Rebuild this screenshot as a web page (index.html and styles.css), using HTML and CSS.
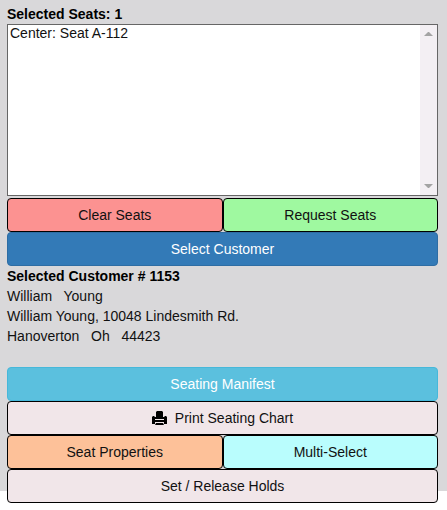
FILE: index.html
```html
<!DOCTYPE html>
<html lang="en">
<head>
<meta charset="utf-8">
<title>Seat Selection</title>
<link rel="stylesheet" href="styles.css">
</head>
<body>
<main class="panel">
  <label class="heading" for="seats">Selected Seats: 1</label>
  <div class="listbox">
    <select id="seats" class="seats" size="9">
      <option>Center: Seat A-112</option>
    </select>
    <div class="scrollbar" aria-hidden="true">
      <svg width="9" height="4" viewBox="0 0 9 4"><path d="M4 0h1l4 4H0z"/></svg>
      <svg width="9" height="4" viewBox="0 0 9 4"><path d="M0 0h9L5 4H4z"/></svg>
    </div>
  </div>
  <div class="row">
    <button type="button" class="btn clear">Clear Seats</button>
    <button type="button" class="btn request">Request Seats</button>
  </div>
  <div class="row">
    <button type="button" class="btn primary">Select Customer</button>
  </div>
  <section class="customer">
    <h2 class="heading">Selected Customer # 1153</h2>
    <p>William &nbsp; Young</p>
    <p>William Young, 10048 Lindesmith Rd.</p>
    <p>Hanoverton &nbsp; Oh &nbsp; 44423</p>
  </section>
  <div class="row">
    <button type="button" class="btn info">Seating Manifest</button>
  </div>
  <div class="row">
    <button type="button" class="btn print">
      <svg class="icon" width="15" height="14" viewBox="0 0 15 14" aria-hidden="true"><path d="M5 0h5l1 1v5H4V1zM0 6l1-1h1l1 1h9l1-1h1l1 1v7h-3v-2H3v2H0zM4 12h7l1 2H3z"/><path class="slot" d="M3 8h9v1H3z"/></svg>
      Print Seating Chart
    </button>
  </div>
  <div class="row">
    <button type="button" class="btn properties">Seat Properties</button>
    <button type="button" class="btn multi">Multi-Select</button>
  </div>
  <div class="row last">
    <button type="button" class="btn holds">Set / Release Holds</button>
  </div>
</main>
</body>
</html>
```
FILE: styles.css
```css
* {
  box-sizing: border-box;
}

body {
  min-height: 100vh;
  margin: 0;
  background: #fff;
  color: #111;
  font: 14px/20px "Liberation Sans", Arial, sans-serif;
}

.panel {
  display: flow-root;
  padding: 4px 9px 0 7px;
  background: #d9d8da;
}

.heading {
  display: block;
  margin: 0;
  color: #000;
  font-size: 14px;
  font-weight: bold;
  line-height: 20px;
}

.listbox {
  display: flex;
  height: 172px;
  margin-bottom: 2px;
  border: 1px solid #666;
  background: #fff;
}

.seats {
  flex: 1;
  min-width: 0;
  padding: 0;
  border: 0;
  outline: 0;
  overflow: hidden;
  background: #fff;
  color: #111;
  font: inherit;
}

.seats option {
  min-height: 0;
  padding: 0 2px;
  line-height: 17px;
}

.scrollbar {
  display: flex;
  flex-direction: column;
  justify-content: space-between;
  align-items: center;
  width: 17px;
  padding: 7px 0;
  background: #f3eff3;
}

.scrollbar svg {
  fill: #a3a3a3;
}

.row {
  display: flex;
}

.btn {
  flex: 1;
  display: flex;
  justify-content: center;
  align-items: center;
  gap: 8px;
  height: 34px;
  padding: 0 12px;
  border: 1px solid #000;
  border-radius: 4px;
  color: #111;
  font: inherit;
}

.clear {
  background: #fc9291;
}

.request {
  background: #9ff9a0;
}

.primary {
  border-color: #2e6da4;
  background: #337ab7;
  color: #fff;
}

.info {
  border-color: #46b8da;
  background: #5bc0de;
  color: #fff;
}

.print,
.holds {
  background: #f1e6e9;
}

.properties {
  background: #fdc199;
}

.multi {
  background: #b9fdfd;
}

.customer {
  margin-bottom: 21px;
}

.customer p {
  margin: 0;
}

.icon {
  fill: #000;
}

.slot {
  fill: #f1e6e9;
}

/* The final button hangs over the bottom edge of the panel. */
.last {
  margin-bottom: -12px;
}
```
